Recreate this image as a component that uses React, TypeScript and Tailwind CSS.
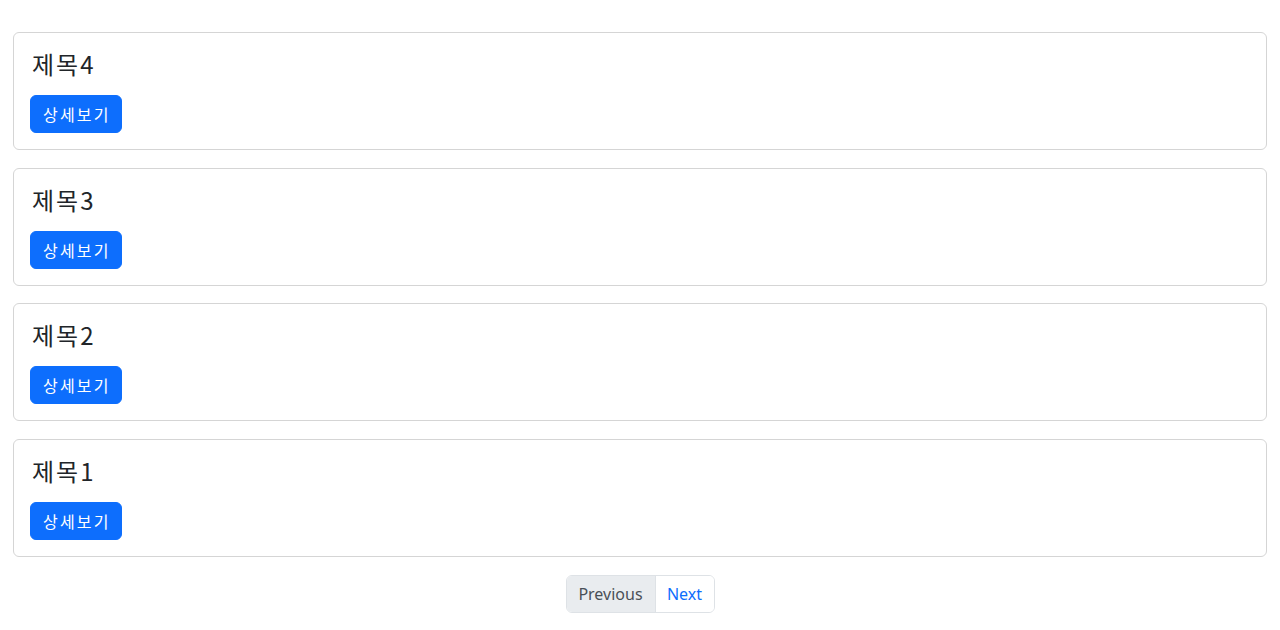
export default function App() {
  const items = ["제목4", "제목3", "제목2", "제목1"];
  return (
    <div
      className="min-h-[630px] bg-white px-[13px] pt-[32px]"
      style={{ fontFamily: '"Noto Sans", "Noto Sans CJK KR", sans-serif' }}
    >
      <div className="flex flex-col gap-[17.5px]">
        {items.map((t) => (
          <div
            key={t}
            className="h-[118px] rounded-[6px] border border-[#d5d5d5] bg-white px-4 pt-4"
          >
            <h5
              className="mb-4 ml-[2px] h-[30px] text-[24px] leading-[30px] tracking-[2px] text-[#212529]"
              style={{ fontFamily: '"Noto Sans CJK KR", sans-serif' }}
            >
              {t}
            </h5>
            <button
              className="flex h-[38px] w-[92px] items-center justify-start rounded-[6px] border border-[#0d6efd] bg-[#0d6efd] pl-[12px] text-[16px] tracking-[2.2px] text-white"
              style={{ fontFamily: '"Noto Sans CJK KR", sans-serif' }}
            >
              상세보기
            </button>
          </div>
        ))}
      </div>
      <div className="mt-[18.5px] flex justify-center">
        <div className="flex h-[38px] overflow-hidden rounded-[6px] border border-[#dee2e6] text-[16px]">
          <span className="flex w-[88px] items-center justify-center bg-[#e9ecef] text-[#495057]">
            Previous
          </span>
          <span className="flex w-[59px] items-center justify-center border-l border-[#dee2e6] bg-white text-[#0d6efd]">
            Next
          </span>
        </div>
      </div>
    </div>
  );
}
